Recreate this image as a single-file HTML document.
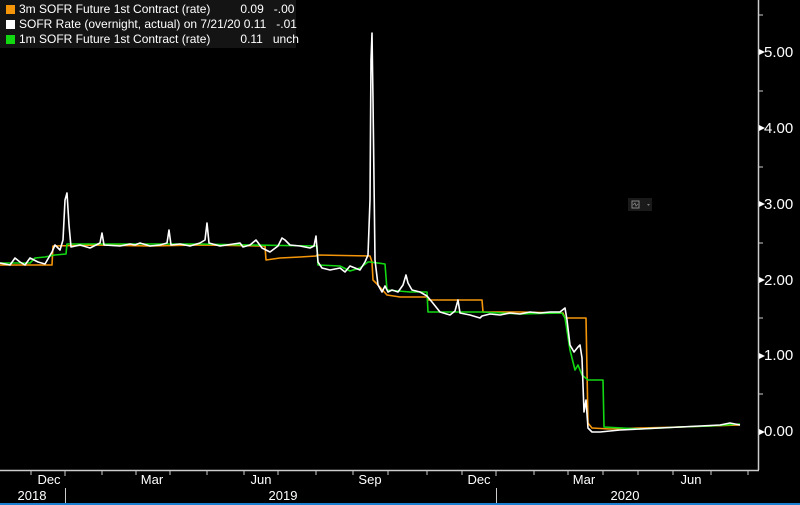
<!DOCTYPE html>
<html><head><style>
html,body{margin:0;padding:0;background:#000;}
body{width:800px;height:505px;position:relative;overflow:hidden;font-family:"Liberation Sans",sans-serif;color:#fff;}
.lg{position:absolute;left:0;top:0;width:296px;height:48px;background:#141414;font-size:12px;line-height:15px;}
.lg div{position:absolute;left:6px;white-space:pre;}
.lg span.sq{display:inline-block;width:9px;height:9px;margin-right:4px;vertical-align:-1px;}
.yl{position:absolute;left:764px;font-size:15px;}
.xl{position:absolute;font-size:13px;transform:translateX(-50%);}
</style></head><body>
<svg width="800" height="505" style="position:absolute;left:0;top:0">
<line x1="758.5" y1="0" x2="758.5" y2="470" stroke="#ccc" stroke-width="1.5"/>
<line x1="0" y1="470.5" x2="759" y2="470.5" stroke="#ccc" stroke-width="1.5"/>
<g fill="#fff">
<polygon points="759,49 765,52 759,55"/><polygon points="759,125 765,128 759,131"/><polygon points="759,201 765,204 759,207"/><polygon points="759,277 765,280 759,283"/><polygon points="759,353 765,356 759,359"/><polygon points="759,429 765,432 759,435"/>
</g>
<g stroke="#ccc" stroke-width="1">
<line x1="759" y1="15" x2="763" y2="15"/><line x1="759" y1="91" x2="763" y2="91"/><line x1="759" y1="167" x2="763" y2="167"/><line x1="759" y1="243" x2="763" y2="243"/><line x1="759" y1="318" x2="763" y2="318"/><line x1="759" y1="394" x2="763" y2="394"/>
<line x1="31" y1="471" x2="31" y2="475"/><line x1="65" y1="471" x2="65" y2="476"/><line x1="102" y1="471" x2="102" y2="475"/><line x1="136" y1="471" x2="136" y2="475"/><line x1="170" y1="471" x2="170" y2="475"/><line x1="207" y1="471" x2="207" y2="475"/><line x1="244" y1="471" x2="244" y2="475"/><line x1="278" y1="471" x2="278" y2="475"/><line x1="316" y1="471" x2="316" y2="475"/><line x1="353" y1="471" x2="353" y2="475"/><line x1="388" y1="471" x2="388" y2="475"/><line x1="427" y1="471" x2="427" y2="475"/><line x1="462" y1="471" x2="462" y2="475"/><line x1="496" y1="471" x2="496" y2="476"/><line x1="534" y1="471" x2="534" y2="475"/><line x1="568" y1="471" x2="568" y2="475"/><line x1="603" y1="471" x2="603" y2="475"/><line x1="638" y1="471" x2="638" y2="475"/><line x1="673" y1="471" x2="673" y2="475"/><line x1="711" y1="471" x2="711" y2="475"/><line x1="748" y1="471" x2="748" y2="475"/>
<line x1="65.5" y1="488" x2="65.5" y2="503"/><line x1="496.5" y1="488" x2="496.5" y2="503"/>
</g>
<line x1="0" y1="504" x2="800" y2="504" stroke="#1a7fd0" stroke-width="2"/>
<g fill="none" stroke-width="1.6" stroke-linejoin="round">
<polyline stroke="#f5960a" points="0,265 52,265 53,246 100,245 150,246 200,245 265,246 266,260 280,258 300,257 316,256 317,255 370,256 372,262 373,280 378,285 387,295 400,297 427,297 428,300 482,300 483,312 520,312 563,313 565,318 586,318 588,423 592,428 610,429 640,428 680,427 710,426 740,425"/>
<polyline stroke="#12d812" points="0,263 30,263 35,258 45,257 55,255 66,254 67,244 150,244 200,244 250,245 317,246 318,265 340,266 350,271 360,268 368,262 370,262 385,264 387,290 410,292 427,292 428,312 482,312 520,314 562,313 565,318 570,350 575,370 578,365 582,375 588,380 603,380 604,427 640,429 680,427 710,426 740,424"/>
<polyline stroke="#fff" points="0,263 10,265 15,258 20,262 25,265 30,258 38,262 45,264 52,252 55,245 60,250 63,240 65,200 67,193 69,225 71,247 80,245 90,248 100,243 102,233 104,245 120,246 130,244 135,245 140,243 150,246 160,245 167,243 169,230 171,245 180,244 190,246 200,243 205,240 207,223 209,243 220,246 240,243 243,247 250,245 256,240 262,248 270,252 278,246 282,238 285,240 290,245 300,246 310,248 314,246 316,236 318,262 322,268 330,270 340,268 345,272 350,266 360,270 365,262 368,255 370,200 371,60 372,33 373,100 375,260 378,285 382,292 385,286 388,292 392,290 398,292 403,285 406,275 408,283 412,290 420,292 427,296 432,302 440,312 450,315 455,311 458,300 460,313 470,315 480,318 482,316 490,314 500,315 510,313 520,314 530,312 540,313 550,312 560,312 565,308 567,320 570,345 574,352 578,347 580,345 582,358 584,412 586,400 588,428 592,432 600,432 620,430 640,429 660,428 680,427 700,426 720,425 730,423 740,425"/>
</g>
<rect x="628" y="198" width="24" height="13" fill="#1a1a1a"/>
<rect x="632" y="201" width="7" height="7" fill="none" stroke="#888" stroke-width="1"/>
<polyline points="633,205 635,203 636,206 638,204" fill="none" stroke="#888" stroke-width="0.8"/>
<polygon points="647,204 650,204 648.5,206" fill="#777"/>
</svg>
<div class="lg">
<div style="top:2px"><span class="sq" style="background:#f5960a"></span>3m SOFR Future 1st Contract (rate)         0.09   -.00</div>
<div style="top:17px"><span class="sq" style="background:#fff"></span>SOFR Rate (overnight, actual) on 7/21/20 0.11   -.01</div>
<div style="top:32px"><span class="sq" style="background:#12d812"></span>1m SOFR Future 1st Contract (rate)         0.11   unch</div>
</div>
<div class="yl" style="top:44px">5.00</div>
<div class="yl" style="top:120px">4.00</div>
<div class="yl" style="top:196px">3.00</div>
<div class="yl" style="top:272px">2.00</div>
<div class="yl" style="top:347px">1.00</div>
<div class="yl" style="top:423px">0.00</div>
<div class="xl" style="left:49px;top:472px">Dec</div>
<div class="xl" style="left:152px;top:472px">Mar</div>
<div class="xl" style="left:261px;top:472px">Jun</div>
<div class="xl" style="left:370px;top:472px">Sep</div>
<div class="xl" style="left:479px;top:472px">Dec</div>
<div class="xl" style="left:584px;top:472px">Mar</div>
<div class="xl" style="left:691px;top:472px">Jun</div>
<div class="xl" style="left:32px;top:488px">2018</div>
<div class="xl" style="left:283px;top:488px">2019</div>
<div class="xl" style="left:625px;top:488px">2020</div>
</body></html>
